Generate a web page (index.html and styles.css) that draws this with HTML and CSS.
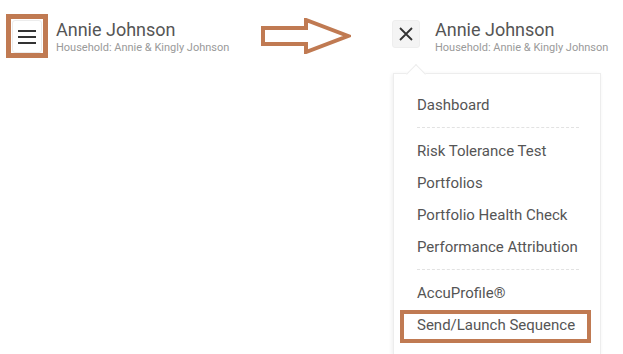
FILE: index.html
```html
<!DOCTYPE html>
<html lang="en">
<head>
    <meta charset="UTF-8">
    <meta name="viewport" content="width=device-width, initial-scale=1.0">
    <title>Client Menu</title>
    <link rel="stylesheet" href="styles.css">
</head>
<body>
    <div class="page">
        <!-- closed state -->
        <div class="side side-closed">
            <div class="profile">
                <div class="mark">
                    <button class="icon-btn" aria-label="Open menu">
                        <svg width="20" height="14" viewBox="0 0 20 14">
                            <path d="M1 1h18M1 7h18M1 13h18" stroke="#333" stroke-width="2" fill="none"/>
                        </svg>
                    </button>
                </div>
                <div class="who">
                    <div class="name">Annie Johnson</div>
                    <div class="household">Household: Annie &amp; Kingly Johnson</div>
                </div>
            </div>
        </div>

        <svg class="arrow" width="90" height="36" viewBox="0 0 90 36">
            <path d="M2 10H45V2L87 18L45 34V26H2Z" fill="none" stroke="#c07a52" stroke-width="4" stroke-linejoin="miter"/>
        </svg>

        <!-- open state -->
        <div class="side side-open">
            <div class="profile">
                <button class="icon-btn close-btn" aria-label="Close menu">
                    <svg width="14" height="14" viewBox="0 0 14 14">
                        <path d="M1 1L13 13M13 1L1 13" stroke="#333" stroke-width="1.8" fill="none"/>
                    </svg>
                </button>
                <div class="who">
                    <div class="name">Annie Johnson</div>
                    <div class="household">Household: Annie &amp; Kingly Johnson</div>
                </div>
            </div>

            <div class="dropdown">
                <ul class="menu">
                    <li>Dashboard</li>
                </ul>
                <hr class="sep">
                <ul class="menu">
                    <li>Risk Tolerance Test</li>
                    <li>Portfolios</li>
                    <li>Portfolio Health Check</li>
                    <li>Performance Attribution</li>
                </ul>
                <hr class="sep">
                <ul class="menu">
                    <li>AccuProfile®</li>
                    <li class="marked">Send/Launch Sequence</li>
                </ul>
            </div>
        </div>
    </div>
</body>
</html>
```

FILE: styles.css
```css
body {
    margin: 0;
    background: #fff;
    font-family: Roboto, "Liberation Sans", Arial, sans-serif;
    overflow: hidden;
}
.page {
    display: flex;
    align-items: flex-start;
    width: 623px;
    height: 354px;
    padding: 14px 0 0 6px;
    box-sizing: border-box;
    overflow: hidden;
}
.side-closed {
    width: 255px;
}
.profile {
    display: flex;
    align-items: flex-start;
}
.mark {
    border: 5px solid #c07a52;
    padding: 1px;
    width: 30px;
    height: 32px;
}
.icon-btn {
    display: flex;
    align-items: center;
    justify-content: center;
    width: 30px;
    height: 33px;
    padding: 0;
    background: #fff;
    border: 1px solid #ececec;
    border-radius: 3px;
}
.who {
    margin: 6px 0 0 8px;
}
.name {
    font-size: 18px;
    line-height: 20px;
    color: #555;
}
.household {
    font-size: 11px;
    line-height: 13px;
    color: #9a9a9a;
    margin-top: 1px;
}
.arrow {
    margin-top: 4px;
    flex: none;
}
.side-open {
    margin-left: 41px;
    padding-top: 6px;
}
.close-btn {
    width: 28px;
    height: 28px;
    background: #f4f4f4;
    border-color: #eee;
}
.side-open .who {
    margin: 0 0 0 15px;
}
.dropdown {
    position: relative;
    margin: 19px 0 0 1px;
    width: 208px;
    height: 282px;
    box-sizing: border-box;
    padding: 15px 21px 0 23px;
    background: #fff;
    border: 1px solid #ededed;
    border-bottom: 0;
    box-shadow: -1px 1px 4px rgba(0,0,0,0.07);
}
.dropdown::before {
    content: "";
    position: absolute;
    top: -7px;
    left: 15px;
    width: 13px;
    height: 13px;
    background: #fff;
    border-left: 1px solid #ededed;
    border-top: 1px solid #ededed;
    transform: rotate(45deg);
}
.menu {
    list-style: none;
    margin: 0;
    padding: 0;
}
.menu li {
    position: relative;
    font-size: 15px;
    line-height: 32px;
    color: #555;
}
.sep {
    border: 0;
    border-top: 1px dashed #e2e2e2;
    margin: 6px 0 7px;
}
.marked::after {
    content: "";
    position: absolute;
    left: -17px;
    top: 1px;
    width: 183px;
    height: 25px;
    border: 4px solid #c07a52;
}
```
